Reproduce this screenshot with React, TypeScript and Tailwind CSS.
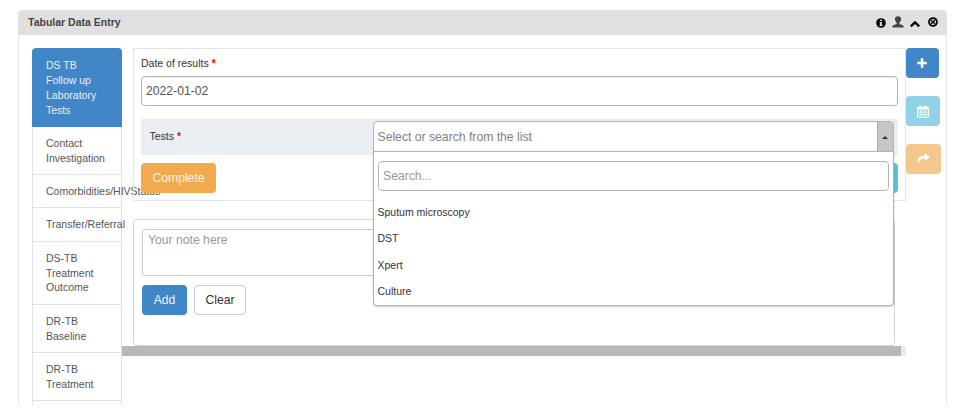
import React from "react";

const tabs: string[][] = [
  ["Contact", "Investigation"],
  ["Comorbidities/HIVStatus"],
  ["Transfer/Referral"],
  ["DS-TB", "Treatment", "Outcome"],
  ["DR-TB", "Baseline"],
  ["DR-TB", "Treatment"],
];

const options = ["Sputum microscopy", "DST", "Xpert", "Culture"];

function Lines({ lines }: { lines: string[] }) {
  return (
    <>
      {lines.map((line) => (
        <span key={line} className="block whitespace-nowrap">
          {line}
        </span>
      ))}
    </>
  );
}

function HeaderIcons() {
  return (
    <div className="flex items-center pr-[8px]">
      <svg className="mt-px h-[10px] w-[10px]" viewBox="0 0 10 10">
        <circle cx="5" cy="5" r="4.8" fill="#000" />
        <path d="M4 1.700h2v1.400H4zM3.600 4h2.300v3h.6v1H3.500V7h.6V5h-.5z" fill="#e0e0e0" />
      </svg>
      <svg className="mb-[2px] ml-[6px] h-[12px] w-[12px]" viewBox="0 0 12 12">
        <path
          d="M6 .2C4 .2 2.900 1.400 2.900 3.100c0 1.500.7 2.900 1.700 3.700v1.200C3.700 8.600.4 8.900.4 10.400v1.100h11.200v-1.100c0-1.500-3.300-1.800-4.200-2.400V6.800c1-.8 1.700-2.200 1.700-3.700C9.100 1.400 8 .2 6 .2z"
          fill="#444"
        />
      </svg>
      <svg className="mt-[2px] ml-[6.500px] h-[8px] w-[10px]" viewBox="0 0 10 8">
        <path d="M.8 6.300 5 2.300 9.200 6.300" fill="none" stroke="#000" strokeWidth="2.300" />
      </svg>
      <svg className="mb-px ml-[8px] h-[10px] w-[10px]" viewBox="0 0 10 10">
        <circle cx="5" cy="5" r="3.900" fill="none" stroke="#000" strokeWidth="1.900" />
        <path d="M3 3 7 7M7 3 3 7" stroke="#000" strokeWidth="1.300" />
      </svg>
    </div>
  );
}

function CalendarIcon() {
  return (
    <svg className="h-[13px] w-[12px]" viewBox="0 0 12 13" fill="none" stroke="#fff">
      <rect x=".5" y="2.200" width="11" height="10.300" rx=".6" />
      <path d="M.5 3.300h11" strokeWidth="2.400" />
      <path d="M3.300.4v3M8.700.4v3" strokeWidth="1.900" />
      <path d="M3.300 4.500v8M6 4.500v8M8.700 4.500v8M.5 7.100h11M.5 9.800h11" strokeWidth=".8" />
    </svg>
  );
}

export default function App() {
  return (
    <div className="h-[411px] overflow-hidden bg-white pt-[10px] pl-[18px] font-['Liberation_Sans',Arial,sans-serif] text-[10.5px] text-[#333]">
      <div className="h-[395px] w-[929px] overflow-hidden rounded-t-[4px] border-x border-[#e2e2e2]">
        <header className="flex h-[25px] items-center justify-between bg-[#e0e0e0] pl-[9px]">
          <h1 className="text-[10.500px] font-bold text-[#444]">Tabular Data Entry</h1>
          <HeaderIcons />
        </header>

        <div className="flex items-start pt-[13.400px] pl-[13px]">
          <nav className="w-[90px] shrink-0 leading-[14.900px] text-[#555]">
            <div className="rounded-t-[4px] bg-[#4186c7] pt-[9.600px] pb-[9.500px] pl-[14px] text-[#e7f0f8]">
              <Lines lines={["DS TB", "Follow up", "Laboratory", "Tests"]} />
            </div>
            {tabs.map((lines, i) => (
              <div key={i} className="border-x border-b border-[#e2e2e2] pt-[8.900px] pb-[8.450px] pl-[13px]">
                <Lines lines={lines} />
              </div>
            ))}
            <div className="h-[20px] border-x border-[#e2e2e2]" />
          </nav>

          <main className="w-[784px] shrink-0">
            <section className="ml-[11px] h-[152.600px] border border-[#e5e5e5] px-[7px] pt-[6.600px]">
              <label className="block h-[20px] leading-[15px]">
                Date of results <span className="font-bold text-[#f00]">*</span>
              </label>
              <div className="flex h-[30px] items-center rounded-[4px] border border-[#b3b3b3] px-[4px] pt-px text-[12.200px] text-[#555] shadow-[inset_0_1px_1px_rgba(0,0,0,0.075)]">
                2022-01-02
              </div>
              <div className="mt-[13px] flex h-[36px] justify-between bg-[#eaeff3] pt-[2.500px] pr-[4.500px] pl-[8.500px]">
                <label className="pt-[7.600px] leading-[15px]">
                  Tests <span className="font-bold text-[#f00]">*</span>
                </label>
                <div className="relative z-10 h-[30px] w-[521px]">
                  <div className="flex h-[30.500px] overflow-hidden rounded-t-[4px] border border-[#b3b3b3] bg-white">
                    <div className="flex grow items-center pt-px pl-[4px] text-[12.200px] text-[#808080]">
                      Select or search from the list
                    </div>
                    <div className="flex w-[16px] items-center justify-center border-l border-[#aaa] bg-[#c6c6c6]">
                      <div className="mt-px border-x-[3px] border-b-[3px] border-x-transparent border-b-[#333]" />
                    </div>
                  </div>
                  <div className="absolute top-[29.600px] left-0 h-[155px] w-[521px] rounded-b-[4px] border border-[#b3b3b3] bg-white px-[4px] pt-[8.500px] shadow-[0_1px_2px_rgba(0,0,0,0.2)]">
                    <div className="flex h-[30px] items-center rounded-[4px] border border-[#b3b3b3] px-[4.500px] pt-px text-[12.200px] text-[#999]">
                      Search...
                    </div>
                    <ul className="pt-[8.700px]">
                      {options.map((o) => (
                        <li key={o} className="flex h-[26.500px] items-center">
                          {o}
                        </li>
                      ))}
                    </ul>
                  </div>
                </div>
              </div>
              <div className="mt-[8px] flex justify-between text-[12.200px] text-white">
                <button className="h-[30px] w-[75px] rounded-[4px] bg-[#f0ab4e] text-[#fdf3e5]">Complete</button>
                <button className="h-[30px] w-[60px] rounded-[4px] bg-[#5bc0de]">Submit</button>
              </div>
            </section>

            <section className="mt-[18px] ml-[11px] h-[127.500px] w-[762px] rounded-[4px] border border-[#d5d5d5] px-[8px] pt-[9px] text-[12.200px]">
              <div className="h-[47px] rounded-[3px] border border-[#ccc] px-[5px] pt-[2px] leading-[17px] text-[#999]">
                Your note here
              </div>
              <div className="flex gap-[7px] pt-[9px]">
                <button className="h-[30px] w-[45px] rounded-[4px] bg-[#4186c7] text-[#edf4fa]">Add</button>
                <button className="h-[30px] w-[52px] rounded-[4px] border border-[#ccc] bg-white">Clear</button>
              </div>
            </section>
            <div className="h-[9.500px] bg-[#ebebeb] pr-[5px]">
              <div className="h-full bg-[#b8b8b8]" />
            </div>
          </main>

          <aside className="flex shrink-0 flex-col items-start gap-[17.800px]">
            <button className="flex h-[30px] w-[33px] items-center justify-center rounded-[4px] bg-[#4186c7]">
              <svg className="mr-px h-[10px] w-[10px]" viewBox="0 0 10 10">
                <path d="M5 .2v9.600M.2 5h9.600" stroke="#fff" strokeWidth="2.500" />
              </svg>
            </button>
            <button className="flex h-[30px] w-[34px] items-center justify-center rounded-[4px] bg-[#92d2e6]">
              <CalendarIcon />
            </button>
            <button className="flex h-[30px] w-[35px] items-center justify-center rounded-[4px] bg-[#f4c88d]">
              <svg className="h-[11px] w-[13px]" viewBox="0 0 13 11">
                <path d="M8 0 12.800 4 8 8V5.600C4.500 5.600 2.200 6.500 1.700 10.600-.3 8.500-.2 2.600 8 2.400z" fill="#fff" />
              </svg>
            </button>
          </aside>
        </div>
      </div>
    </div>
  );
}
